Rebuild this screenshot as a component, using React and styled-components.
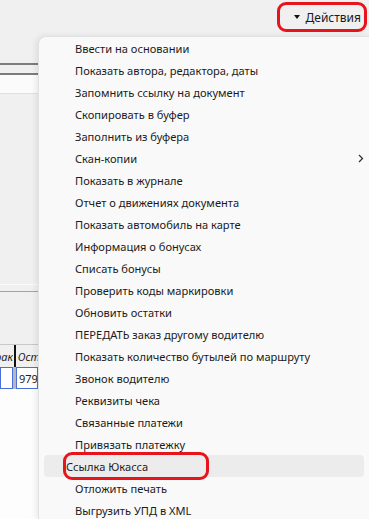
import React from "react";
import styled, { createGlobalStyle } from "styled-components";

const GlobalStyle = createGlobalStyle`
  html, body {
    margin: 0;
    padding: 0;
    background: #f0f0f0;
  }
  body {
    font-family: "Noto Sans", "Open Sans", sans-serif;
  }
`;

const items = [
  "Ввести на основании",
  "Показать автора, редактора, даты",
  "Запомнить ссылку на документ",
  "Скопировать в буфер",
  "Заполнить из буфера",
  { label: "Скан-копии", sub: true },
  "Показать в журнале",
  "Отчет о движениях документа",
  "Показать автомобиль на карте",
  "Информация о бонусах",
  "Списать бонусы",
  "Проверить коды маркировки",
  "Обновить остатки",
  "ПЕРЕДАТЬ заказ другому водителю",
  "Показать количество бутылей по маршруту",
  "Звонок водителю",
  "Реквизиты чека",
  "Связанные платежи",
  "Привязать платежку",
  { label: "Ссылка Юкасса", active: true },
  "Отложить печать",
  "Выгрузить УПД в XML",
];

function App() {
  return (
    <Page>
      <GlobalStyle />
      <TopBar>
        <ActionsButton>
          <Caret />
          Действия
        </ActionsButton>
      </TopBar>
      <Body>
        <LeftPane>
          <Gap h={27} />
          <Rule />
          <Gap h={8} />
          <Rule />
          <Field />
          <Gap h={190} />
          <ThinRule light />
          <Gap h={6} />
          <ThinRule />
          <Gap h={52} />
          <Grid>
            <HeadRow>
              <HeadCell w={13}>рак</HeadCell>
              <Divider />
              <HeadCell w={22}>Ост</HeadCell>
            </HeadRow>
            <DataRow>
              <DataCell w={13} />
              <Spacer />
              <DataCell w={22}>979.</DataCell>
            </DataRow>
          </Grid>
          <WhiteFill />
        </LeftPane>
        <Menu>
          {items.map((it, i) => {
            const label = typeof it === "string" ? it : it.label;
            const active = typeof it === "object" && it.active;
            const sub = typeof it === "object" && it.sub;
            return (
              <Item key={i} active={active}>
                {label}
                {sub && (
                  <Chevron width="6" height="9" viewBox="0 0 6 9">
                    <path d="M1 1 L4.5 4.5 L1 8" fill="none" stroke="#333" strokeWidth="1.3" />
                  </Chevron>
                )}
                {active && <Mark />}
              </Item>
            );
          })}
        </Menu>
      </Body>
    </Page>
  );
}

export default App;

const Page = styled.div`
  width: 369px;
  height: 519px;
  overflow: hidden;
  background: #f0f0f0;
  display: flex;
  flex-direction: column;
`;

const TopBar = styled.div`
  height: 36px;
  display: flex;
  justify-content: flex-end;
  align-items: flex-start;
  padding-right: 2px;
  box-sizing: border-box;
`;

const ActionsButton = styled.div`
  margin-top: 2px;
  width: 90px;
  height: 30px;
  box-sizing: border-box;
  border: 3px solid #e8141c;
  border-radius: 9px;
  display: flex;
  align-items: center;
  justify-content: flex-end;
  gap: 6px;
  padding-right: 3px;
  font-size: 12px;
  color: #1a1a1a;
`;

const Caret = styled.span`
  width: 0;
  height: 0;
  border-left: 3.5px solid transparent;
  border-right: 3.5px solid transparent;
  border-top: 4px solid #111;
`;

const Body = styled.div`
  flex: 1;
  display: flex;
  min-height: 0;
`;

const LeftPane = styled.div`
  width: 38px;
  flex-shrink: 0;
  display: flex;
  flex-direction: column;
  background: #f0f0f0;
`;

const Gap = styled.div`
  height: ${(p) => p.h}px;
  flex-shrink: 0;
`;

const Rule = styled.div`
  height: 2px;
  background: #7c7c7c;
  flex-shrink: 0;
`;

const Field = styled.div`
  height: 18px;
  background: #fbfbfb;
  border-bottom: 1px solid #e0e0e0;
  flex-shrink: 0;
`;

const ThinRule = styled.div`
  height: 1px;
  background: ${(p) => (p.light ? "#fbfbfb" : "#a3a3a3")};
  flex-shrink: 0;
`;

const Grid = styled.div`
  display: flex;
  flex-direction: column;
  flex-shrink: 0;
`;

const HeadRow = styled.div`
  height: 22px;
  display: flex;
  align-items: stretch;
  border-top: 1px solid #c8c8c8;
  background: #f0f0f0;
`;

const HeadCell = styled.div`
  width: ${(p) => p.w}px;
  overflow: hidden;
  white-space: nowrap;
  font-style: italic;
  font-size: 11px;
  color: #222;
  display: flex;
  align-items: center;
  justify-content: ${(p) => (p.w < 20 ? "flex-end" : "flex-start")};
  padding-left: 1px;
`;

const Divider = styled.div`
  width: 2px;
  margin: 0 1px;
  background: #111;
`;

const DataRow = styled.div`
  height: 22px;
  display: flex;
  background: #b8b8b8;
`;

const Spacer = styled.div`
  width: 3px;
  background: #b8b8b8;
`;

const DataCell = styled.div`
  width: ${(p) => p.w}px;
  box-sizing: border-box;
  background: #fff;
  border: 1px solid #4a6fd8;
  overflow: hidden;
  white-space: nowrap;
  font-size: 11px;
  color: #222;
  display: flex;
  align-items: center;
  padding-left: 2px;
`;

const WhiteFill = styled.div`
  flex: 1;
  background: #fdfdfd;
`;

const Menu = styled.div`
  flex: 1;
  background: #f9f9f9;
  border-top: 1px solid #e2e2e2;
  border-left: 1px solid #e2e2e2;
  border-top-left-radius: 8px;
  box-shadow: -2px 0 6px rgba(0, 0, 0, 0.08);
  display: flex;
  flex-direction: column;
  position: relative;
  z-index: 1;
`;

const Item = styled.div`
  position: relative;
  height: 22px;
  flex-shrink: 0;
  display: flex;
  align-items: center;
  margin: 0 5px;
  padding-left: ${(p) => (p.active ? 22 : 31)}px;
  border-radius: 4px;
  background: ${(p) => (p.active ? "#ececec" : "transparent")};
  font-size: 11.1px;
  color: #1b1b1b;
  white-space: nowrap;
`;

const Chevron = styled.svg`
  position: absolute;
  right: 0;
  top: 7px;
`;

const Mark = styled.div`
  position: absolute;
  left: 19px;
  top: -3px;
  width: 146px;
  height: 28px;
  box-sizing: border-box;
  border: 3px solid #e8141c;
  border-radius: 9px;
  pointer-events: none;
`;
